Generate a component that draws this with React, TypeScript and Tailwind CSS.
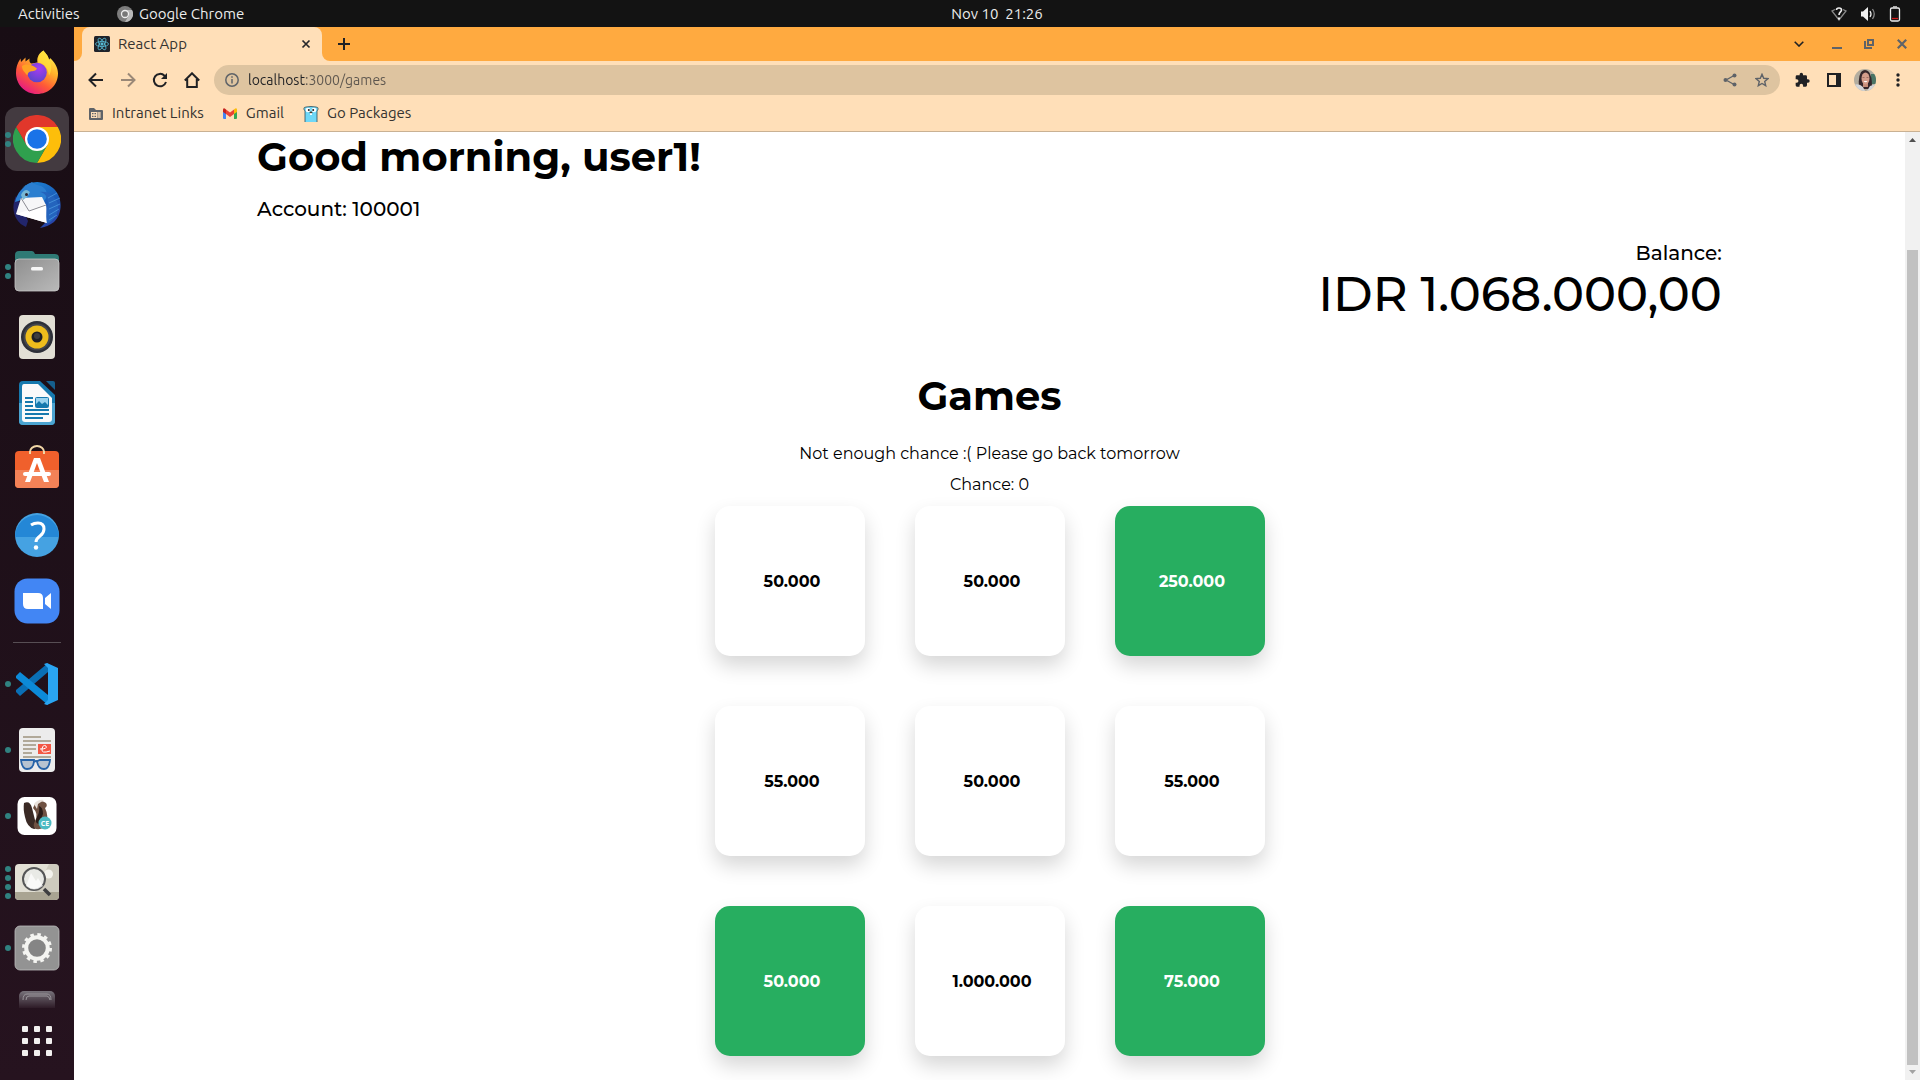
import type { ReactNode } from "react";

const cards = [
  { v: "50.000", on: false },
  { v: "50.000", on: false },
  { v: "250.000", on: true },
  { v: "55.000", on: false },
  { v: "50.000", on: false },
  { v: "55.000", on: false },
  { v: "50.000", on: true },
  { v: "1.000.000", on: false },
  { v: "75.000", on: true },
];

function Icon({ children, size = 48 }: { children: ReactNode; size?: number }) {
  return (
    <svg width={size} height={size} viewBox="0 0 48 48" aria-hidden="true">
      {children}
    </svg>
  );
}

function Firefox() {
  return (
    <Icon>
      <defs>
        <linearGradient id="ffBody" x1=".85" y1=".05" x2=".25" y2="1">
          <stop offset="0" stopColor="#fff44f" />
          <stop offset=".35" stopColor="#ffb02a" />
          <stop offset=".65" stopColor="#ff5a36" />
          <stop offset="1" stopColor="#e3148c" />
        </linearGradient>
        <radialGradient id="ffOrb" cx=".6" cy=".3" r=".8">
          <stop offset="0" stopColor="#a63cf0" />
          <stop offset="1" stopColor="#5346c8" />
        </radialGradient>
      </defs>
      <path fill="url(#ffBody)" d="M30.500 1.500c1.500 2.500 4.500 4.500 5.500 9 .8-.2 1-1 1-1.500 4.500 4 8 9.500 8 15.500C45 36.500 35.500 45 24 45S3 36 3 24c0-5 1-9.500 4.500-14.500L8 13l4.500-4.500v4l4-3c-.5 3 .5 4.500 2 5l6-1c-1-5 1.500-9.500 6-12z" />
      <circle cx="24" cy="23.500" r="9.800" fill="url(#ffOrb)" />
      <path fill="#ffa224" d="M9 17c5-3 10-1 15 2.500-1 2.500-4 2.500-6.500 3-2 .5-3 2-3 4-2.500-3-5.500-5-5.500-9.500z" />
      <path fill="#ffe03c" opacity=".75" d="M30.500 1.500c1.500 2.500 4.500 4.500 5.500 9 3 5 3 11 0 16-1-8-5-12-10.500-13-1-5 1.500-9.500 5-12z" />
    </Icon>
  );
}

function Chrome() {
  return (
    <Icon>
      <path fill="#fdbe0a" d="M24 12h20.800A24 24 0 0 1 24 48l10.400-18z" />
      <path fill="#2fa04e" d="M3.200 12 13.600 30 24 36l10.400-6L24 48A24 24 0 0 1 3.200 12z" />
      <path fill="#e1372b" d="M13.600 30 3.200 12a24 24 0 0 1 41.600 0H24z" />
      <circle cx="24" cy="24" r="12" fill="#fff" />
      <circle cx="24" cy="24" r="9.800" fill="#1a73e8" />
    </Icon>
  );
}

function Thunderbird() {
  return (
    <Icon>
      <defs>
        <linearGradient id="tb" x1=".3" y1="0" x2=".8" y2="1">
          <stop offset="0" stopColor="#1c7fd0" />
          <stop offset=".5" stopColor="#1b5cb8" />
          <stop offset="1" stopColor="#2b3fa5" />
        </linearGradient>
      </defs>
      <path fill="#22256b" d="M3 15C-3 28 2 42 13 46l2-6L7 22z" />
      <path fill="url(#tb)" d="M9 7C17-1 31-1 40 7c10 9 10 25 1 34-4 3-8 5-14 6l6-6-18-9L9 20C9 12 13 7 19 3 14 4 11 6 9 7z" />
      <path fill="#2b7fd0" d="M2 21C4 12 10 5 19 1c3 4 9 2 13 7 3 4 2 9-1 12L12 18z" />
      <path fill="#f6f6f8" d="m8 17 21-1 4 8 1 18L3 33z" />
      <path fill="#fff" d="m3 33 13-4 17-6 1 19z" />
      <path fill="none" stroke="#8b8b93" strokeWidth="1" d="m8 17 8 13 17-6" />
      <path fill="#2464bd" d="M27 11c5 1 10 6 7 16-1 6-1 11 0 16 8-4 12-12 11-20-3-8-9-13-18-12z" />
      <path fill="none" stroke="#56a8ea" strokeWidth="1" opacity=".6" d="m35 17 9-5m-8 10 11-5m-11 11 11-5m-11 11 10-6m-10 11 8-5" />
      <path fill="#77b8d5" d="M8 14c1-3 3-5 6-5l3 2-3 5-4 3z" />
      <circle cx="13.500" cy="13.500" r="1.500" fill="#2a2330" />
    </Icon>
  );
}

function Files() {
  return (
    <Icon>
      <defs>
        <linearGradient id="fl" x1="0" y1="0" x2="1" y2="1">
          <stop offset="0" stopColor="#8f8f8f" />
          <stop offset="1" stopColor="#b9b9b9" />
        </linearGradient>
      </defs>
      <path fill="#2f7a75" d="M2 8q0-4 4-4h13q2 0 3 3h20q4 0 4 4v10H2z" />
      <rect x="2" y="12" width="44" height="32" rx="4" fill="url(#fl)" stroke="#c7c7c7" strokeWidth=".8" />
      <rect x="18" y="20" width="12" height="3.500" rx="1.500" fill="#f7f7f7" />
    </Icon>
  );
}

function Rhythmbox() {
  return (
    <Icon>
      <rect x="6" y="2" width="36" height="44" rx="4" fill="#e2dfd5" />
      <circle cx="24" cy="24" r="16" fill="#2d2f38" />
      <circle cx="24" cy="24" r="13.500" fill="#44464d" />
      <circle cx="24" cy="24" r="11.500" fill="#eebd1c" />
      <circle cx="24" cy="24" r="5.500" fill="#1f2024" />
      <circle cx="24" cy="23" r="3" fill="#3d3d3f" />
    </Icon>
  );
}

function Writer() {
  return (
    <Icon>
      <path fill="#1679ae" d="M10 2h17l15 14v26q0 4-4 4H10q-4 0-4-4V6q0-4 4-4z" />
      <path fill="#4ba4d1" d="M6 24h36v18q0 4-4 4H10q-4 0-4-4z" />
      <path fill="#155f8d" d="M33 2h7q2 0 2 2v7z" />
      <path fill="#fafafa" d="M11 5h14l14 14v21q0 3-3 3H12q-3 0-3-3V8q0-3 2-3z" />
      <path stroke="#1679ae" strokeWidth="2" d="M12 19h8m-8 4h8m-8 4h8m-8 4h24m-24 4h24m-24 4h18" />
      <rect x="22.500" y="18.500" width="13" height="10" rx="1" fill="#9bd3ee" stroke="#1679ae" />
      <path fill="#1679ae" d="m23 28 0-3 3-3 3 3 3-2 3 3v2z" />
    </Icon>
  );
}

function Software() {
  return (
    <Icon>
      <path fill="none" stroke="#f1d6a6" strokeWidth="2" d="M17 8V7a7 6 0 0 1 14 0v1" />
      <rect x="2" y="6" width="44" height="37" rx="4" fill="#f0602c" />
      <path fill="#f38257" d="M2 25h44v14q0 4-4 4H6q-4 0-4-4z" />
      <path stroke="#f1d6a6" strokeWidth="2" d="M17 6v3m14-3v3" />
      <path fill="#fff" fillRule="evenodd" d="M21 13h6l9 24h-5l-2.500-6.500h-9L17 37h-5zm3 5-3.300 9h6.600z" />
      <rect x="10" y="27" width="28" height="4" rx="2" fill="#fff" />
    </Icon>
  );
}

function Help() {
  return (
    <Icon>
      <circle cx="24" cy="24" r="22" fill="#45a2e2" />
      <path fill="#2487d6" d="M2 26a22 22 0 1 1 44 0z" />
      <path fill="none" stroke="#fff" strokeWidth="3" d="M18 14q3-2 7-2 6 0 6 6 0 4-4 7t-4 6" />
      <circle cx="23" cy="36.500" r="2.200" fill="#fff" />
    </Icon>
  );
}

function Zoom() {
  return (
    <Icon>
      <rect x="1.500" y="1.500" width="45" height="45" rx="13" fill="#4286f4" />
      <path fill="#fff" d="M10 16h15q5 0 5 5v11H15q-5 0-5-5zM32 21l6-5v16l-6-5z" />
    </Icon>
  );
}

function Code() {
  return (
    <Icon>
      <path fill="#0a6fb5" d="m3 32 4 4L35 12V3L3 30z" />
      <path fill="#0c8ad8" d="m3 16 4-4 28 23v10L3 18z" />
      <path fill="#2aa5f2" d="m34 3 11 5v32l-11 5-3-1 4-4V8l-4-4z" />
    </Icon>
  );
}

function Reader() {
  return (
    <Icon>
      <rect x="6" y="2" width="36" height="44" rx="4" fill="#ececec" />
      <path stroke="#b1a999" strokeWidth="2" d="M10 11h18M10 15h28M10 19h13M10 23h13M10 27h9M10 31h28" />
      <rect x="25" y="18" width="13" height="10" fill="#f35845" />
      <path fill="none" stroke="#fff" d="M27 23q8 0 6-3-3-2-4 3t8 2" />
      <path fill="#b7c3d0" stroke="#2663a8" strokeWidth="1.800" d="M8 34h13q0 9-7 9-5 0-6-9zm19 0h10q-1 9-6 9-6 0-7-8z" />
      <path fill="none" stroke="#2663a8" strokeWidth="1.800" d="M21 36q2-2 4 0" />
    </Icon>
  );
}

function Beaver() {
  return (
    <Icon>
      <rect x="4.500" y="5" width="39" height="38" rx="7" fill="#fff" />
      <path fill="#3a2a25" d="M11 11q6-3 8 5l4 16q1 5-2 5-7-2-9-12-2-8-1-14z" />
      <path fill="#6e5142" d="M22 12q6-5 11-1 2 3-1 5 4 8 1 16-2 6-10 5-4-2-1-8 4-7-2-13z" />
      <path fill="#e9e2dc" d="M21 12q4-5 10-4l-6 4-1 5z" />
      <path fill="#2a1c18" d="M26 14q4 1 4 8l-4 10q-5-1-2-7 3-5 2-11z" />
      <circle cx="32" cy="31" r="6.500" fill="#4dbac3" />
      <text x="32" y="34" textAnchor="middle" fontSize="7" fontWeight="700" fill="#fff" fontFamily="Open Sans">CE</text>
    </Icon>
  );
}

function Viewer() {
  return (
    <Icon>
      <rect x="2" y="6" width="44" height="36" rx="4" fill="#e2e0d5" />
      <path fill="#b9b6a8" d="M46 14v20H22L36 6h6q4 0 4 4z" opacity=".5" />
      <path fill="#a9a492" d="M2 34h44v4q0 4-4 4H6q-4 0-4-4z" />
      <circle cx="35.500" cy="16" r="4.500" fill="#f3f2ec" />
      <circle cx="21" cy="21" r="11" fill="#e9eae6" stroke="#555657" strokeWidth="2" />
      <path fill="#fff" d="m13 28 5-13 5 8 2-3 5 8q-9 7-17 0z" opacity=".7" />
      <path stroke="#3e3e40" strokeWidth="3.500" d="m31 31 6 6" />
    </Icon>
  );
}

function Settings() {
  return (
    <Icon>
      <rect x="2" y="2" width="44" height="44" rx="5" fill="#939393" stroke="#bcbcbc" strokeWidth=".8" />
      <circle cx="24" cy="24" r="13.500" fill="none" stroke="#f4f4f1" strokeWidth="3" strokeDasharray="3.530 3.530" />
      <circle cx="24" cy="24" r="10.800" fill="#858585" stroke="#f4f4f1" strokeWidth="4" />
    </Icon>
  );
}

const dockTop = [
  { name: "Firefox", icon: <Firefox />, dots: 0 },
  { name: "Google Chrome", icon: <Chrome />, dots: 2, active: true },
  { name: "Thunderbird", icon: <Thunderbird />, dots: 0 },
  { name: "Files", icon: <Files />, dots: 2 },
  { name: "Rhythmbox", icon: <Rhythmbox />, dots: 0 },
  { name: "Writer", icon: <Writer />, dots: 0 },
  { name: "Software", icon: <Software />, dots: 0 },
  { name: "Help", icon: <Help />, dots: 0 },
  { name: "Zoom", icon: <Zoom />, dots: 0 },
];
const dockBottom = [
  { name: "Visual Studio Code", icon: <Code />, dots: 1 },
  { name: "Document Viewer", icon: <Reader />, dots: 1 },
  { name: "DBeaver", icon: <Beaver />, dots: 1 },
  { name: "Image Viewer", icon: <Viewer />, dots: 4 },
  { name: "Settings", icon: <Settings />, dots: 1 },
];

function DockItem({ name, icon, dots, active }: { name: string; icon: ReactNode; dots: number; active?: boolean }) {
  return (
    <button
      aria-label={name}
      className={`relative flex size-16 shrink-0 items-center justify-center rounded-xl ${active ? "bg-[#433a40]" : ""}`}
    >
      <span className="absolute inset-y-0 left-0 flex flex-col justify-center gap-[3px]">
        {Array.from({ length: dots }, (_, i) => (
          <span key={i} className="size-[6px] rounded-full bg-[#308280]" />
        ))}
      </span>
      {icon}
    </button>
  );
}

function Dock() {
  return (
    <nav aria-label="Dock" className="flex w-[74px] shrink-0 flex-col items-center bg-linear-to-b from-[#180d14] to-[#26131f]">
      <div className="flex min-h-0 flex-1 flex-col items-center gap-[2px] overflow-hidden pt-[14px]">
        {dockTop.map((d) => (
          <DockItem key={d.name} {...d} />
        ))}
        <div className="my-[7px] h-px w-12 shrink-0 bg-[#574e54]" />
        {dockBottom.map((d) => (
          <DockItem key={d.name} {...d} />
        ))}
        <button aria-label="Disk" className="flex size-16 shrink-0 items-center justify-center">
          <Icon>
            <defs>
              <linearGradient id="dk" x1="0" y1="0" x2="0" y2="1">
                <stop offset="0" stopColor="#77727a" />
                <stop offset=".4" stopColor="#2b1824" />
              </linearGradient>
            </defs>
            <rect x="6" y="1" width="36" height="44" rx="5" fill="url(#dk)" />
            <path fill="none" stroke="#9a969b" d="M10 10q0-6 4-6h20q4 0 4 6M13 10q0-4 3-4h18q2 0 3 4" />
          </Icon>
        </button>
      </div>
      <button aria-label="Show applications" className="grid h-[72px] shrink-0 grid-cols-3 content-center gap-[6px] pb-[6px]">
        {Array.from({ length: 9 }, (_, i) => (
          <span key={i} className="size-[6px] rounded-[1px] bg-[#f2f0ef]" />
        ))}
      </button>
    </nav>
  );
}

function TopBar() {
  return (
    <header className="flex h-[27px] shrink-0 items-center bg-[#131313] pt-px text-[15px] text-[#ececec]">
      <button className="w-[74px] shrink-0 pl-[18px] text-left whitespace-nowrap">Activities</button>
      <div className="grid flex-1 grid-cols-[1fr_auto_1fr] items-center">
        <button className="flex items-center gap-[6px] pl-[43px]">
          <svg width="16" height="16" viewBox="0 0 16 16" aria-hidden="true">
            <circle cx="8" cy="8" r="8" fill="#7d7d7d" />
            <path fill="#b8b8b8" d="M8 4h7a8 8 0 0 1-7 12l4-7z" />
            <circle cx="8" cy="8" r="3.500" fill="#777" stroke="#eee" strokeWidth="1.300" />
          </svg>
          Google Chrome
        </button>
        <button className="whitespace-pre">Nov 10  21:26</button>
        <div className="flex items-center justify-end gap-[13px] pr-[19px]">
          <svg width="16" height="14" viewBox="0 0 16 14" fill="none" role="img" aria-label="Network">
            <path stroke="#8a8a8a" strokeWidth="1.300" d="M4 2.500 1 4l7 9 7-9-3-1.500" />
            <path stroke="#eee" strokeWidth="1.600" d="M5.500 3q0-2 2.500-2t2.500 2c0 2-2.500 2-2.500 5" />
            <rect x="7" y="10.500" width="2" height="2" fill="#eee" />
          </svg>
          <svg width="16" height="14" viewBox="0 0 16 14" fill="none" role="img" aria-label="Volume">
            <path fill="#f0f0f0" d="M1 4.500h2L8 0v14L3 9.500H1z" />
            <path stroke="#eee" strokeWidth="1.300" d="M10 4q2 3 0 6" />
            <path stroke="#888" strokeWidth="1.300" d="M12.500 2q3.500 5 0 10" />
          </svg>
          <svg width="12" height="16" viewBox="0 0 12 16" fill="none" role="img" aria-label="Battery">
            <rect x="1.500" y="2" width="9" height="13" rx="1.500" stroke="#eee" strokeWidth="1.300" />
            <path stroke="#eee" d="M4 .8h4" />
            <path stroke="#d01818" strokeWidth="1.300" d="M3 12.500h6" />
          </svg>
        </div>
      </div>
    </header>
  );
}

function TabStrip() {
  return (
    <div className="flex h-[34px] shrink-0 items-stretch bg-[#ffaa40] pr-[13px]">
      <div className="w-2 bg-[#ffdfb8]">
        <div className="size-full rounded-br-lg bg-[#ffaa40]" />
      </div>
      <div className="flex w-[240px] items-center rounded-t-lg bg-[#ffdfb8] pr-[11px] pl-3">
        <svg width="16" height="16" viewBox="0 0 16 16" fill="none" stroke="#58bdd8" strokeWidth=".8" aria-hidden="true">
          <rect width="16" height="16" rx="1.500" fill="#20232a" stroke="none" />
          <ellipse cx="8" cy="8" rx="6.500" ry="2.500" />
          <ellipse cx="8" cy="8" rx="6.500" ry="2.500" transform="rotate(60 8 8)" />
          <ellipse cx="8" cy="8" rx="6.500" ry="2.500" transform="rotate(120 8 8)" />
          <circle cx="8" cy="8" r="1.200" fill="#58bdd8" />
        </svg>
        <span className="ml-2 flex-1 text-[15px] text-[#353330]">React App</span>
        <button aria-label="Close tab">
          <svg width="10" height="10" viewBox="0 0 10 10" stroke="#27272a" strokeWidth="1.700" aria-hidden="true">
            <path d="m1.500 1.500 7 7m0-7-7 7" />
          </svg>
        </button>
      </div>
      <div className="w-2 bg-[#ffdfb8]">
        <div className="size-full rounded-bl-lg bg-[#ffaa40]" />
      </div>
      <button aria-label="New tab" className="ml-2">
        <svg width="12" height="12" viewBox="0 0 12 12" stroke="#202124" strokeWidth="2" aria-hidden="true">
          <path d="M6 0v12M0 6h12" />
        </svg>
      </button>
      <div className="flex flex-1 items-center justify-end gap-[22px]">
        <button aria-label="Search tabs" className="mr-[6px]">
          <svg width="10" height="6" viewBox="0 0 10 6" fill="none" stroke="#202124" strokeWidth="1.600" aria-hidden="true">
            <path d="m.7.700 4.300 4.300L9.300.700" />
          </svg>
        </button>
        <button aria-label="Minimise">
          <svg width="10" height="10" viewBox="0 0 10 10" aria-hidden="true">
            <path fill="#5f6368" d="M0 8h10v2H0z" />
          </svg>
        </button>
        <button aria-label="Restore" className="mr-px">
          <svg width="10" height="10" viewBox="0 0 10 10" fill="none" stroke="#5f6368" strokeWidth="2" aria-hidden="true">
            <path d="M4 1h5v5H4zM1 2v7h7" />
          </svg>
        </button>
        <button aria-label="Close">
          <svg width="10" height="10" viewBox="0 0 10 10" stroke="#5f6368" strokeWidth="2.200" aria-hidden="true">
            <path d="m.8.800 8.400 8.400m0-8.400L.8 9.200" />
          </svg>
        </button>
      </div>
    </div>
  );
}

function Toolbar() {
  return (
    <div className="flex h-[38px] shrink-0 items-center pr-5 pl-[14px]">
      <div className="flex items-center gap-4">
        <button aria-label="Back">
          <svg width="16" height="16" viewBox="0 0 16 16" fill="none" stroke="#202124" strokeWidth="2" aria-hidden="true">
            <path d="M15 8H2M8 1.500 1.500 8 8 14.500" />
          </svg>
        </button>
        <button aria-label="Forward">
          <svg width="16" height="16" viewBox="0 0 16 16" fill="none" stroke="#9a8877" strokeWidth="2" aria-hidden="true">
            <path d="M1 8h13M8 1.500 14.500 8 8 14.500" />
          </svg>
        </button>
        <button aria-label="Reload">
          <svg width="16" height="16" viewBox="0 0 16 16" fill="none" stroke="#202124" strokeWidth="2" aria-hidden="true">
            <path d="M14 10A6.200 6.200 0 1 1 12.500 3.700L14 5.500" />
            <path fill="#202124" stroke="none" d="M15 1v6H9z" />
          </svg>
        </button>
        <button aria-label="Home">
          <svg width="16" height="16" viewBox="0 0 16 16" fill="none" stroke="#202124" strokeWidth="2" aria-hidden="true">
            <path d="M.8 8.500 8 1.300l7.200 7.200M3.200 7v8h9.600V7" />
          </svg>
        </button>
      </div>
      <div className="ml-[14px] flex h-[30px] flex-1 items-center rounded-full bg-[#dec4a0] px-[11px]">
        <svg width="14" height="14" viewBox="0 0 14 14" fill="none" stroke="#5f6368" strokeWidth="1.500" aria-hidden="true">
          <circle cx="7" cy="7" r="6.200" />
          <path d="M7 6v4.500M7 3.300v1.500" />
        </svg>
        <input
          aria-label="Address"
          defaultValue="localhost:3000/games"
          className="ml-[9px] min-w-0 flex-1 bg-[linear-gradient(90deg,#202124_58px,#5c554d_58px)] bg-clip-text text-[14px] text-transparent caret-black outline-none"
        />
        <button aria-label="Share" className="mr-[18px]">
          <svg width="14" height="14" viewBox="0 0 14 14" stroke="#5f6368" strokeWidth="1.300" aria-hidden="true">
            <path d="m12 2-9 5 9 5" fill="none" />
            <g fill="#5f6368" stroke="none">
              <circle cx="11.500" cy="2.500" r="2" />
              <circle cx="2.500" cy="7" r="2" />
              <circle cx="11.500" cy="11.500" r="2" />
            </g>
          </svg>
        </button>
        <button aria-label="Bookmark">
          <svg width="14" height="14" viewBox="0 0 14 14" fill="none" stroke="#5f6368" strokeWidth="1.400" aria-hidden="true">
            <path d="m7 1.300 1.700 4 4.300.3-3.300 2.900 1 4.200L7 10.500l-3.700 2.200 1-4.200L1 5.600l4.300-.3z" />
          </svg>
        </button>
      </div>
      <div className="ml-[14px] flex items-center">
        <button aria-label="Extensions" className="mr-[17px]">
          <svg width="16" height="16" viewBox="0 0 24 24" fill="#202124" aria-hidden="true">
            <path d="M21 11h-1.500V7a2 2 0 0 0-2-2h-4V3.500a2.500 2.500 0 0 0-5 0V5h-4a2 2 0 0 0-2 2v3.800H4a2.700 2.700 0 0 1 0 5.400H2.500V20a2 2 0 0 0 2 2h3.800v-1.500a2.700 2.700 0 0 1 5.400 0V22h3.800a2 2 0 0 0 2-2v-4H21a2.500 2.500 0 0 0 0-5z" />
          </svg>
        </button>
        <button aria-label="Side panel" className="mr-[13px]">
          <svg width="14" height="14" viewBox="0 0 14 14" aria-hidden="true">
            <path fill="#202124" fillRule="evenodd" d="M0 0h14v14H0zM2 2v10h7V2z" />
          </svg>
        </button>
        <button aria-label="Profile" className="mr-5">
          <svg width="22" height="22" viewBox="0 0 22 22" aria-hidden="true">
            <defs>
              <clipPath id="face">
                <circle cx="11" cy="11" r="11" />
              </clipPath>
            </defs>
            <g clipPath="url(#face)">
              <path fill="#b3ad9f" d="M0 0h22v22H0z" />
              <path fill="#4b7565" d="M17 5h5v10h-5z" />
              <path fill="#35262a" d="M7 3q4-4 8 0 3 4 3 14l-3 3H7l-2-3Q4 8 7 3z" />
              <path fill="#c58c78" d="M9 14h5v4H9z" />
              <ellipse cx="11.500" cy="9.500" rx="4" ry="6" fill="#d49d8b" />
              <path fill="#d3d5d8" d="M0 16q5-2 9 2l2 4H0zM22 15l-6 2-3 5h9z" />
              <path fill="#fff" d="M9.500 12h4q-2 2.500-4 0z" />
              <path stroke="#8a5c52" strokeWidth=".7" d="M8.500 8.500h2m2 0h2" />
            </g>
          </svg>
        </button>
        <button aria-label="Menu">
          <svg width="4" height="14" viewBox="0 0 4 14" fill="#202124" aria-hidden="true">
            <circle cx="2" cy="2" r="1.700" />
            <circle cx="2" cy="7" r="1.700" />
            <circle cx="2" cy="12" r="1.700" />
          </svg>
        </button>
      </div>
    </div>
  );
}

function Bookmarks() {
  return (
    <div className="flex h-[33px] shrink-0 items-center gap-[19px] border-b border-[#c9b193] pb-[3px] pl-[15px] text-[15px] text-[#353330]">
      <a href="#intranet" className="flex items-center gap-[9px]">
        <svg width="14" height="12" viewBox="0 0 14 12" aria-hidden="true">
          <path fill="#5f6368" fillRule="evenodd" d="M1 0h4l2 2h6q1 0 1 1v8q0 1-1 1H1q-1 0-1-1V1q0-1 1-1zm1 4v6h10V4z" />
          <path stroke="#5f6368" strokeWidth="1.200" strokeDasharray="1.500 1" d="M3 5.600h4M3 8.400h4M8 5h4M8 7h4M8 9h4" />
        </svg>
        Intranet Links
      </a>
      <a href="#gmail" className="flex items-center gap-[9px]">
        <svg width="14" height="11" viewBox="0 0 14 11" aria-hidden="true">
          <path fill="#4285f4" d="M0 2h3v9H1q-1 0-1-1z" />
          <path fill="#34a853" d="M11 2h3v8q0 1-1 1h-2z" />
          <path fill="#fbbc04" d="M11 1.500Q14-1 14 2v2l-3 2z" />
          <path fill="#c5221f" d="M3 1.500Q0-1 0 2v2l3 2z" />
          <path fill="#ea4335" d="m3 1.500 4 3 4-3V6L7 9 3 6z" />
        </svg>
        Gmail
      </a>
      <a href="#go" className="flex items-center gap-2">
        <svg width="16" height="16" viewBox="0 0 16 16" aria-hidden="true">
          <path fill="#6fd8f7" d="M1 3q0-2 2-2 5-1 10 0 2 0 2 2l-1 2v11H2V5z" />
          <path fill="none" stroke="#2d4c58" strokeWidth=".8" d="M2 16V5L.8 3Q.8 1 3 1q5-1 10 0 2.200 0 2.200 2L14 5v11" />
          <circle cx="5" cy="4" r="2.300" fill="#fff" />
          <circle cx="11" cy="4" r="2.300" fill="#fff" />
          <circle cx="5.800" cy="4" r="1" fill="#222" />
          <circle cx="10.200" cy="4" r="1" fill="#222" />
          <ellipse cx="8" cy="6.500" rx="1.500" ry="1" fill="#4b3a2c" />
          <path fill="#fff" d="M7 7.300h2V9H7z" />
        </svg>
        Go Packages
      </a>
    </div>
  );
}

function Scrollbar() {
  return (
    <div aria-hidden="true" className="flex w-[15px] shrink-0 flex-col items-center bg-[#f1f1f1]">
      <svg width="15" height="17" viewBox="0 0 15 17"><path fill="#505050" d="m4 10 3.500-4 3.500 4z" /></svg>
      <div className="flex-[101]" />
      <div className="w-[11px] flex-[815] bg-[#c1c1c1]" />
      <svg width="15" height="15" viewBox="0 0 15 15"><path fill="#a3a3a3" d="m4 5 3.500 4L11 5z" /></svg>
    </div>
  );
}

function Games() {
  return (
    <main className="min-w-0 flex-1 overflow-hidden bg-white font-['Montserrat','Inter',sans-serif] text-black">
      <div className="mx-auto w-4/5">
        <h1 className="text-[40px] leading-[50px] font-bold">Good morning, user1!</h1>
        <p className="mt-[15px] text-[20px] leading-6 font-medium">Account: 100001</p>
        <div className="mt-5 text-right font-medium">
          <p className="text-[20px] leading-6">Balance:</p>
          <p className="text-[48px] leading-[58px]">IDR 1.068.000,00</p>
        </div>
        <section className="mt-12 flex flex-col items-center">
          <h2 className="text-[40px] leading-[50px] font-bold">Games</h2>
          <p className="mt-[23px] text-[16px] leading-5">Not enough chance :( Please go back tomorrow</p>
          <p className="mt-[11px] text-[16px] leading-5">Chance: 0</p>
          <div className="mt-[11px] ml-px grid grid-cols-3 gap-[50px]">
            {cards.map((c, i) => (
              <button
                key={i}
                className={`size-[150px] rounded-[15px] pt-[2px] pl-1 text-[16px] font-bold shadow-[0_10px_20px_rgba(0,0,0,0.16)] ${c.on ? "bg-[#27ae60] text-white" : "bg-white text-black"}`}
              >
                {c.v}
              </button>
            ))}
          </div>
        </section>
      </div>
    </main>
  );
}

export default function App() {
  return (
    <div className="flex h-screen flex-col overflow-hidden font-['Ubuntu','Noto_Sans',sans-serif]">
      <TopBar />
      <div className="flex min-h-0 flex-1">
        <Dock />
        <div className="flex min-w-0 flex-1 flex-col bg-[#ffdfb8]">
          <TabStrip />
          <Toolbar />
          <Bookmarks />
          <div className="flex min-h-0 flex-1">
            <Games />
            <Scrollbar />
          </div>
        </div>
      </div>
    </div>
  );
}
